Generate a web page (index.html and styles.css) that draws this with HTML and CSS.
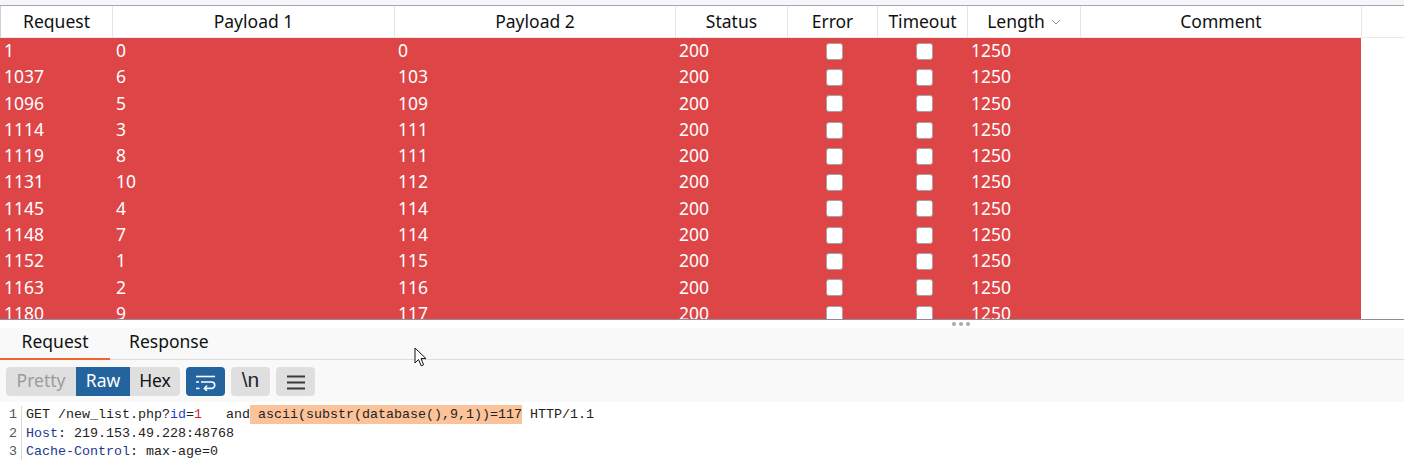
FILE: index.html
```html
<!DOCTYPE html>
<html>
<head>
<meta charset="utf-8">
<link rel="stylesheet" href="styles.css">
</head>
<body>
<div class="topbar"></div>
<div class="results">
  <div class="row head">
    <div class="c">Request</div>
    <div class="c">Payload 1</div>
    <div class="c">Payload 2</div>
    <div class="c">Status</div>
    <div class="c">Error</div>
    <div class="c">Timeout</div>
    <div class="c">Length <svg class="sort" width="10" height="6" viewBox="0 0 10 6"><path d="M1 1 L5 5 L9 1" fill="none" stroke="#9a9a9a" stroke-width="1"/></svg></div>
    <div class="c">Comment</div>
    <div class="c filler"></div>
  </div>
  <div class="body" id="body"></div>
</div>
<div class="splitter"><span></span><span></span><span></span></div>
<div class="panel">
  <div class="tabs">
    <div class="tab active">Request</div>
    <div class="tab">Response</div>
  </div>
  <div class="toolbar">
    <div class="seg">
      <div class="sb dim">Pretty</div>
      <div class="sb on">Raw</div>
      <div class="sb">Hex</div>
    </div>
    <div class="ib on">
      <svg width="22" height="18" viewBox="0 0 22 18"><path d="M1 3.5 H20" stroke="#fff" stroke-width="1.6" fill="none"/><path d="M1 9 H4 M6 9 H16.5 A3.2 3.2 0 0 1 16.5 15.4 H10" stroke="#fff" stroke-width="1.6" fill="none"/><path d="M12 12.6 L9.4 15.4 L12 18" stroke="#fff" stroke-width="1.5" fill="none"/><path d="M1 15.4 H4.5" stroke="#fff" stroke-width="1.6" fill="none"/></svg>
    </div>
    <div class="ib nl">\n</div>
    <div class="ib">
      <svg width="20" height="16" viewBox="0 0 20 16"><path d="M1 2.5 H19 M1 8.5 H19 M1 14.5 H19" stroke="#3a3a3a" stroke-width="2" fill="none"/></svg>
    </div>
  </div>
  <div class="editor">
    <div class="ln"><span class="num">1</span><span class="code">GET /new_list.php?<span class="k">id</span>=<span class="v">1</span>   and<span class="hl"> ascii(substr(database(),9,1))=117</span> HTTP/1.1</span></div>
    <div class="ln"><span class="num">2</span><span class="code"><span class="h">Host</span>: 219.153.49.228:48768</span></div>
    <div class="ln"><span class="num">3</span><span class="code"><span class="h">Cache-Control</span>: max-age=0</span></div>
  </div>
</div>
<svg class="cursor" width="14" height="22" viewBox="0 0 14 22"><path d="M1 1 L1 16 L4.5 12.5 L7.2 18.8 L9.6 17.8 L7 11.6 L12 11.6 Z" fill="#fff" stroke="#111" stroke-width="1" stroke-linejoin="round"/></svg>
<script>
const data=[[1,0,0],[1037,6,103],[1096,5,109],[1114,3,111],[1119,8,111],[1131,10,112],[1145,4,114],[1148,7,114],[1152,1,115],[1163,2,116],[1180,9,117]];
const b=document.getElementById('body');
let h='';
for(const r of data){
  h+='<div class="row item"><div class="c">'+r[0]+'</div><div class="c">'+r[1]+'</div><div class="c">'+r[2]+'</div><div class="c">200</div><div class="c cb"><i class="chk e"></i></div><div class="c cb"><i class="chk t"></i></div><div class="c">1250</div><div class="c"></div><div class="c filler"></div></div>';
}
b.innerHTML=h;
</script>
</body>
</html>
```
FILE: styles.css
```css
* { box-sizing: border-box; }
html, body { margin: 0; padding: 0; }
body {
  width: 1404px;
  height: 460px;
  overflow: hidden;
  background: #fff;
  font-family: "Noto Sans", "Open Sans", sans-serif;
  position: relative;
}
.topbar {
  height: 6px;
  background: #f6f6f8;
  border-bottom: 1px solid #a6a5b6;
}
.results {
  border-bottom: 1px solid #8d8c9c;
}
.row {
  display: grid;
  grid-template-columns: 112px 282px 281px 112px 90px 90px 113px 281px 1fr;
}
.head {
  height: 32px;
  border-bottom: 1px solid #e9e9e9;
  border-left: 1px solid #cfcfd6;
}
.head .c {
  border-right: 1px solid #e6e6e6;
  display: flex;
  align-items: center;
  justify-content: center;
  font-size: 17.5px;
  color: #111;
  padding-bottom: 1px;
}
.head .c.filler { border-right: none; }
.sort { margin-left: 6px; margin-top: 2px; }
.body {
  height: 281px;
  overflow: hidden;
}
.item {
  height: 26.3px;
}
.item .c {
  background: #dd4547;
  color: #fff;
  font-size: 17.5px;
  line-height: 24px;
  padding-left: 4px;
  white-space: nowrap;
}
.item .c.filler { background: #fff; }
.item .cb {
  display: flex;
  align-items: center;
  justify-content: center;
  padding-left: 0;
}
.chk {
  display: block;
  width: 17px;
  height: 17px;
  background: #fff;
  border: 1px solid #a4a4a4;
  border-radius: 3px;
}
.chk.e { margin-left: 5px; }
.chk.t { margin-left: 5px; }
.splitter {
  height: 8px;
  display: flex;
  gap: 3px;
  padding-left: 952px;
  padding-top: 2px;
}
.splitter span {
  width: 4px;
  height: 4px;
  border-radius: 50%;
  background: #a9a9a9;
}
.panel {
  background: #f9f9f9;
}
.tabs {
  display: flex;
  height: 32px;
  border-bottom: 1px solid #dcdcdc;
}
.tab {
  font-size: 17.5px;
  color: #111;
  padding: 0 19px;
  line-height: 27px;
}
.tab.active {
  width: 110px;
  border-bottom: 2px solid #f0642d;
  text-align: center;
  padding: 0;
  margin-bottom: -1px;
}
.toolbar {
  display: flex;
  gap: 6px;
  padding: 7px 6px 6px;
  height: 42px;
}
.seg {
  display: flex;
  height: 29px;
  border-radius: 4px;
  overflow: hidden;
  background: #dfdfdf;
}
.sb {
  font-size: 17.5px;
  line-height: 27px;
  color: #111;
  padding: 0 9px;
}
.sb.dim { color: #9b9b9b; width: 70px; text-align: center; padding: 0; }
.sb.on { background: #23639e; color: #fff; width: 54px; text-align: center; padding: 0; }
.sb:last-child { width: 50px; text-align: center; padding: 0; }
.ib {
  width: 39px;
  height: 29px;
  border-radius: 4px;
  background: #dfdfdf;
  display: flex;
  align-items: center;
  justify-content: center;
}
.ib.on { background: #23639e; }
.ib.nl {
  font-size: 21px;
  color: #262626;
  font-family: "Liberation Sans", sans-serif;
  padding-bottom: 3px;
}
.editor {
  background: #fff;
  padding-top: 4px;
  height: 60px;
}
.ln {
  display: flex;
  height: 18.6px;
  align-items: center;
  font-family: "Liberation Mono", "DejaVu Sans Mono", monospace;
  font-size: 13.33px;
  color: #222;
  white-space: pre;
}
.num {
  width: 22px;
  text-align: right;
  padding-right: 4px;
  color: #555;
  border-right: 1px solid #d8d8d8;
  height: 100%;
  line-height: 18.6px;
}
.code { padding-left: 4px; line-height: 18.6px; }
.k { color: #1f3fcf; }
.v { color: #cf2b2b; }
.h { color: #1c3a8c; }
.hl { background: #fcc39a; padding: 2px 0; }
.cursor {
  position: absolute;
  left: 414px;
  top: 347px;
}
```
